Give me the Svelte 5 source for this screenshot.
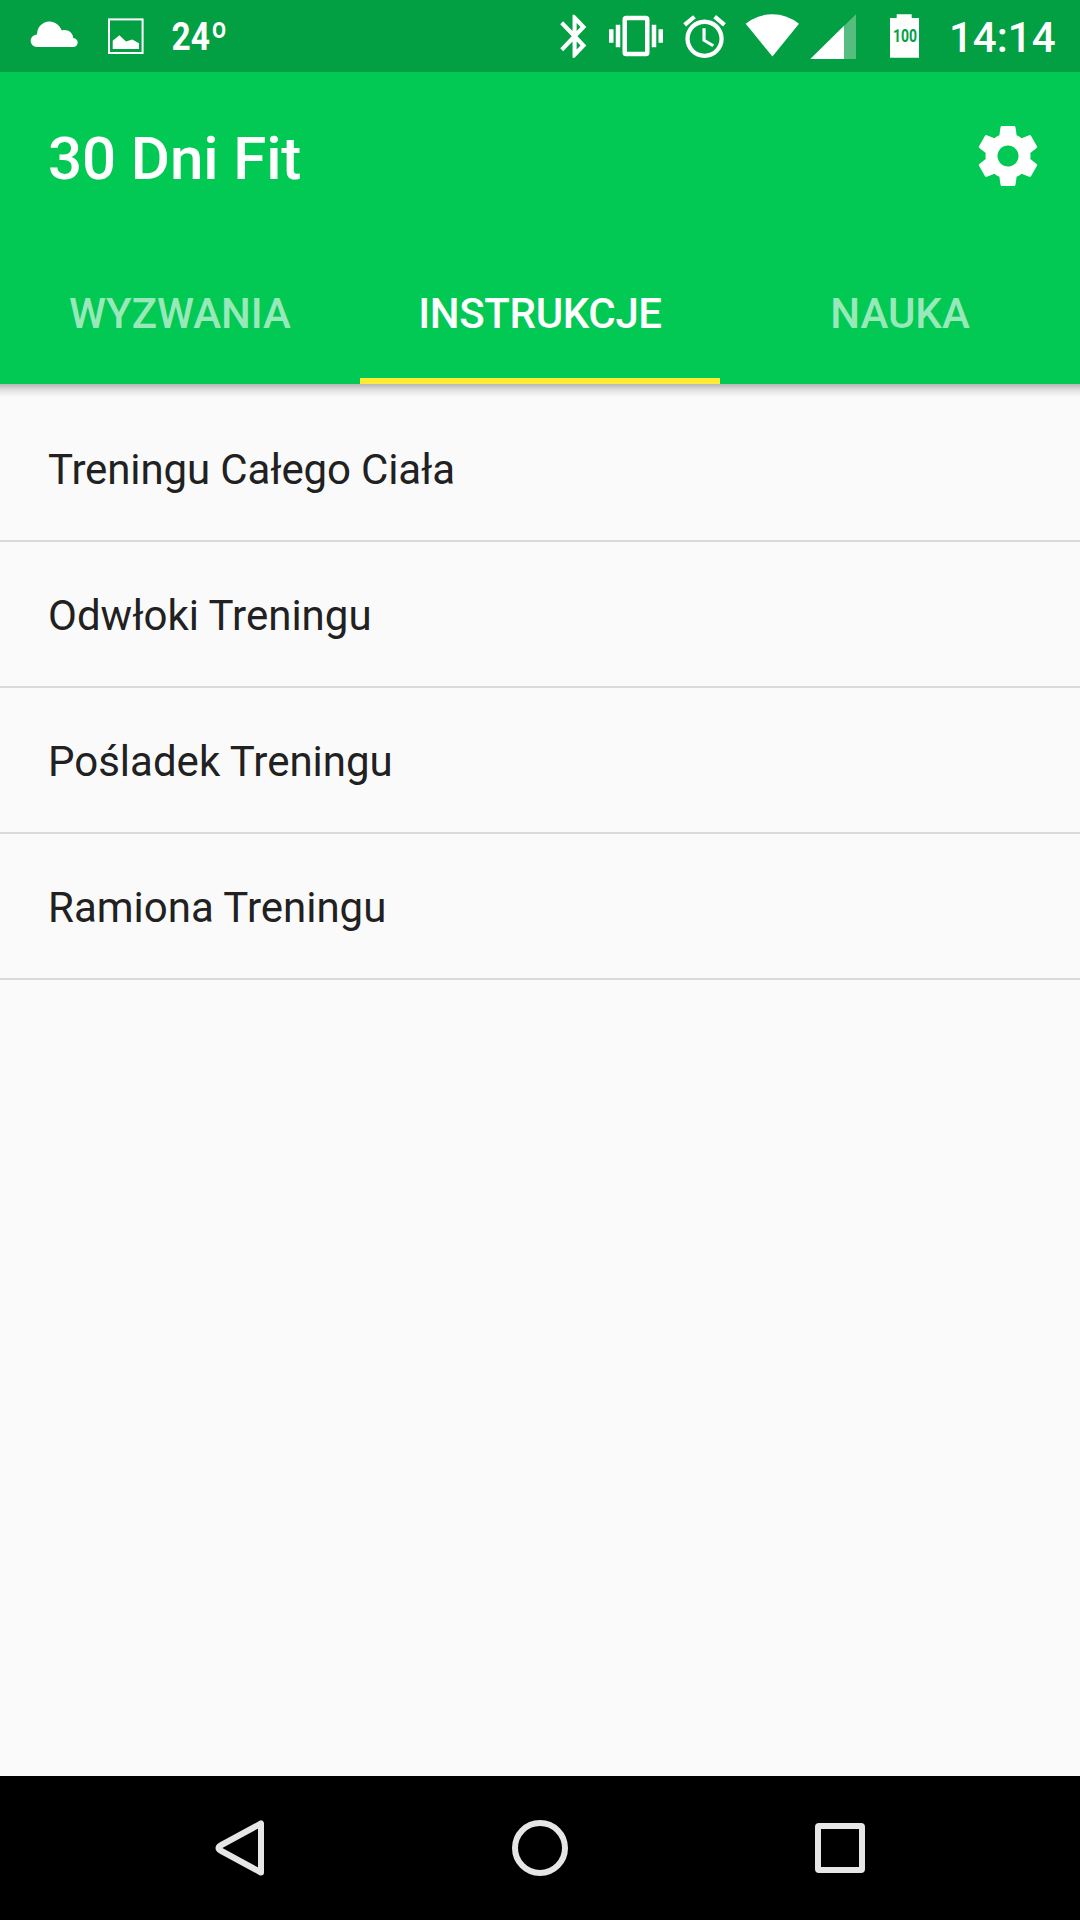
<script lang="ts">
    const tabs: string[] = ['WYZWANIA', 'INSTRUKCJE', 'NAUKA'];
    const workouts: string[] = [
        'Treningu Całego Ciała',
        'Odwłoki Treningu',
        'Pośladek Treningu',
        'Ramiona Treningu'
    ];

    let activeTab = $state(1);
</script>

<svelte:head>
    <title>30 Dni Fit</title>
</svelte:head>

<div class="screen">
    <div class="status-bar">
        <!-- both groups are drawn in screen units, 72px tall -->
        <svg class="status-icons" width="240" height="72" viewBox="0 0 240 72">
            <path d="M37 47C33.500 47 30.700 44.300 30.700 40.800C30.700 37.400 33.300 34.800 37 34.500C37 27 42.500 21.500 49.500 21.500C55 21.500 59.500 25 61.800 30.400C67.500 28.800 73 32.500 73.200 38C76 38.200 77.700 40.200 77.700 42.500C77.700 45 75.700 47 73.200 47Z" />
            <rect class="frame" x="109" y="19.400" width="33.600" height="33.600" />
            <path d="M112.700 49V40.700L119.400 35.300L126 41.400L132.300 39.600L139 43.300V49Z" />
            <text class="temperature" transform="translate(171.500 50) scale(0.870 1)">24<tspan class="degree" dx="1" dy="2">º</tspan></text>
        </svg>

        <svg class="status-icons" width="530" height="72" viewBox="550 0 530 72">
            <path transform="translate(550 10.500) scale(2.050 2.150)" d="M17.710 7.710L12 2h-1v7.590L6.410 5 5 6.410 10.590 12 5 17.590 6.410 19 11 14.410V22h1l5.710-5.710-4.300-4.290 4.300-4.290zM13 5.830l1.880 1.880L13 9.590V5.830zm1.880 10.460L13 18.170v-3.760l1.880 1.880z" />
            <path transform="translate(609 9) scale(2.250)" d="M0 15h2V9H0v6zm3 2h2V7H3v10zm19-8v6h2V9h-2zm-3 8h2V7h-2v10zM16.500 3h-9C6.670 3 6 3.670 6 4.500v15c0 .83.67 1.500 1.500 1.500h9c.83 0 1.500-.67 1.500-1.500v-15c0-.83-.67-1.500-1.500-1.500zM16 19H8V5h8v14z" />
            <path transform="translate(679 11.100) scale(2.130)" d="M22 5.700l-4.600-3.900-1.300 1.500 4.600 3.900L22 5.700zM7.900 3.400L6.600 1.900 2 5.700l1.300 1.500 4.600-3.800zM12.500 8H11v6l4.700 2.900.8-1.200-4-2.400V8zM12 4c-5 0-9 4-9 9s4 9 9 9 9-4 9-9-4-9-9-9zm0 16c-3.900 0-7-3.100-7-7s3.100-7 7-7 7 3.100 7 7-3.100 7-7 7z" />
            <path d="M745.700 23.700A42.500 42.500 0 0 1 799 23.700L772.400 56.500Z" />
            <path class="faded" d="M844 26V59H856V14.300Z" />
            <path d="M810.300 59L844 25.800V59Z" />
            <path d="M890 18H896.700V14.300H911.700V18H919V57.700H890Z" />
            <text class="battery-level" x="893" y="42" textLength="24" lengthAdjust="spacingAndGlyphs">100</text>
            <text class="clock" x="949" y="52">14:14</text>
        </svg>
    </div>

    <header>
        <div class="toolbar">
            <h1>30 Dni Fit</h1>
            <button class="settings" aria-label="Ustawienia">
                <svg width="72" height="72" viewBox="0 0 24 24">
                    <path d="M19.430 12.980c.04-.32.07-.64.07-.98s-.03-.66-.07-.98l2.110-1.650c.19-.15.24-.42.12-.64l-2-3.460c-.12-.22-.39-.3-.61-.22l-2.490 1c-.52-.4-1.080-.73-1.690-.98l-.38-2.650C14.460 2.180 14.250 2 14 2h-4c-.25 0-.46.18-.49.42l-.38 2.650c-.61.25-1.170.59-1.690.98l-2.490-1c-.23-.09-.49 0-.61.22l-2 3.460c-.13.22-.07.49.12.64l2.110 1.650c-.04.32-.07.65-.07.98s.03.66.07.98l-2.110 1.650c-.19.15-.24.42-.12.64l2 3.460c.12.22.39.3.61.22l2.490-1c.52.4 1.080.73 1.690.98l.38 2.650c.03.24.24.42.49.42h4c.25 0 .46-.18.49-.42l.38-2.650c.61-.25 1.170-.59 1.690-.98l2.490 1c.23.09.49 0 .61-.22l2-3.460c.12-.22.07-.49-.12-.64l-2.110-1.650zM12 15.500c-1.930 0-3.500-1.570-3.500-3.500s1.570-3.500 3.500-3.500 3.500 1.570 3.500 3.500-1.570 3.500-3.500 3.500z" />
                </svg>
            </button>
        </div>

        <nav class="tabs">
            {#each tabs as tab, i}
                <button class="tab" class:active={i === activeTab} onclick={() => (activeTab = i)}>
                    {tab}
                </button>
            {/each}
        </nav>
    </header>

    <main>
        <ul>
            {#each workouts as workout}
                <li>{workout}</li>
            {/each}
        </ul>
    </main>

    <footer>
        <svg width="60" height="60" viewBox="0 0 60 60">
            <path d="M51 5.500V54.500L10.500 32.500Q6.500 30 10.500 27.500Z" />
        </svg>
        <svg width="60" height="60" viewBox="0 0 60 60">
            <circle cx="30" cy="30" r="25" />
        </svg>
        <svg width="60" height="60" viewBox="0 0 60 60">
            <rect x="8" y="8" width="44" height="44" rx="1" />
        </svg>
    </footer>
</div>

<style>
    :global(body) {
        margin: 0;
    }

    .screen {
        display: flex;
        flex-direction: column;
        width: 1080px;
        height: 1920px;
        background: #fafafa;
        color: #212121;
        font-family: Roboto, sans-serif;
        overflow: hidden;
    }

    .status-bar {
        display: flex;
        justify-content: space-between;
        height: 72px;
        background: #02a042;
    }

    .status-icons {
        display: block;
        fill: #fff;
    }

    .frame {
        fill: none;
        stroke: #fff;
        stroke-width: 2;
    }

    .faded {
        fill: #55be7f;
    }

    .temperature {
        font-size: 38.5px;
        font-weight: 700;
    }

    .degree {
        font-size: 42px;
        font-weight: 500;
    }

    .battery-level {
        fill: #02a042;
        font-size: 17.5px;
        font-weight: 700;
    }

    .clock {
        font-size: 42px;
        font-weight: 500;
    }

    header {
        height: 312px;
        background: #02c953;
        color: #fff;
    }

    button {
        padding: 0;
        border: none;
        background: none;
        color: inherit;
        font-family: inherit;
        cursor: pointer;
    }

    .toolbar {
        display: flex;
        align-items: center;
        justify-content: space-between;
        height: 168px;
        padding: 0 36px 0 48px;
    }

    h1 {
        margin: 6px 0 0;
        font-size: 60px;
        font-weight: 500;
        line-height: 72px;
        letter-spacing: -0.1px;
    }

    .settings svg {
        display: block;
        fill: #fff;
    }

    .tabs {
        display: grid;
        grid-template-columns: repeat(3, 1fr);
        height: 144px;
    }

    .tab {
        box-sizing: border-box;
        padding-top: 8px;
        border-bottom: 6px solid transparent;
        color: rgba(255, 255, 255, 0.6);
        font-size: 42px;
        font-weight: 500;
    }

    .tab.active {
        border-bottom-color: #ffeb35;
        color: #fff;
        letter-spacing: -0.35px;
    }

    /* toolbar shadow falls on the top of the list */
    main {
        flex: 1;
        padding-top: 12px;
        background: linear-gradient(rgba(0, 0, 0, 0.27), rgba(0, 0, 0, 0.1) 6px, transparent 13px);
    }

    ul {
        margin: 0;
        padding: 0;
        list-style: none;
    }

    li {
        height: 144px;
        padding: 0 48px;
        border-bottom: 2px solid #dadada;
        font-size: 42px;
        line-height: 148px;
    }

    li:first-child {
        letter-spacing: -0.13px;
    }

    footer {
        display: flex;
        align-items: center;
        justify-content: center;
        gap: 240px;
        height: 144px;
        background: #000;
    }

    footer svg {
        fill: none;
        stroke: #e6e6e6;
        stroke-width: 6;
        stroke-linejoin: round;
    }
</style>
